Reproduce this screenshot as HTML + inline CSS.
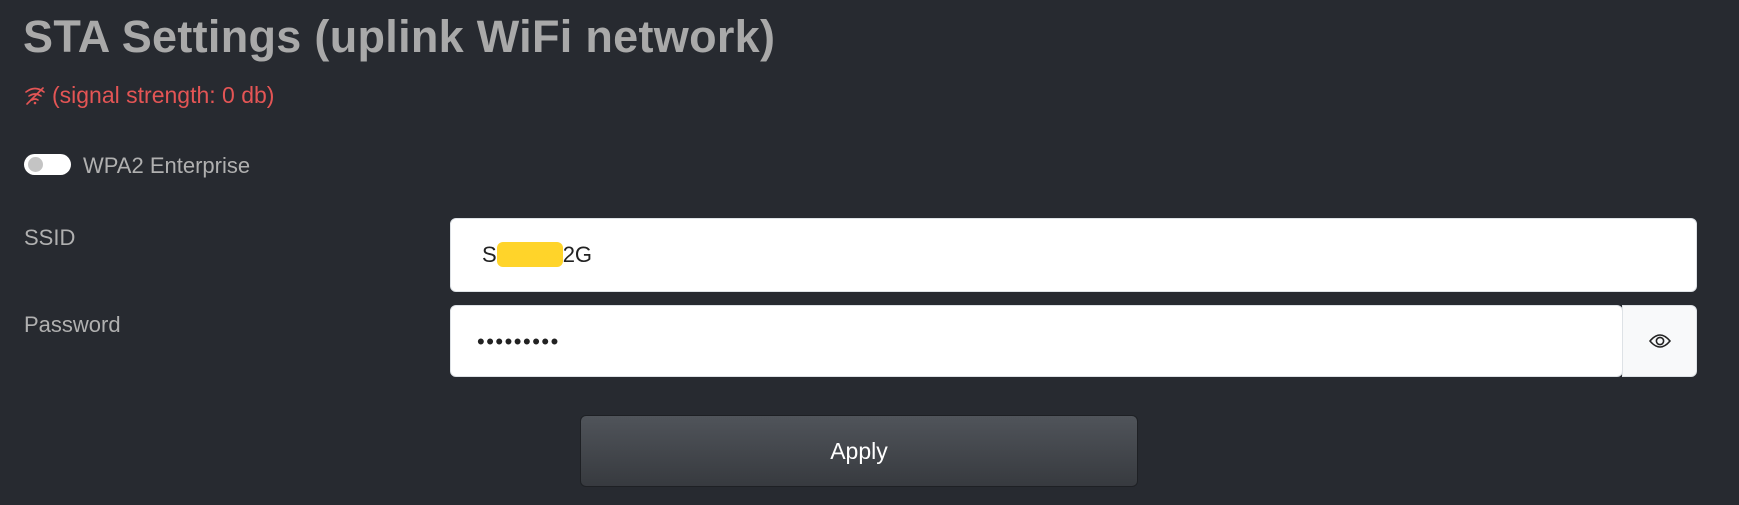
<!DOCTYPE html>
<html><head><style>
html,body{margin:0;padding:0;width:1739px;height:505px;background:#272a30;overflow:hidden;font-family:"Liberation Sans",sans-serif;}
.a{position:absolute;}
.t{left:23px;top:11px;font-size:45px;font-weight:bold;color:#a9a9a9;white-space:nowrap;letter-spacing:0.3px;}
.sig{left:24px;top:82px;font-size:23px;color:#e45555;white-space:nowrap;}
.tog{left:24px;top:154px;width:47px;height:21px;background:#fff;border-radius:11px;}
.tog i{position:absolute;left:4px;top:3px;width:15px;height:15px;border-radius:50%;background:#c4c4c4;}
.lbl{font-size:22px;color:#b0b0b0;white-space:nowrap;}
.in{background:#fff;border:1px solid #dee2e6;border-radius:6px;box-sizing:border-box;font-size:22px;color:#222;}
</style></head><body>
<div class="a t">STA Settings (uplink WiFi network)</div>
<div class="a sig"><svg width="22" height="20" viewBox="0 0 22 20" style="vertical-align:-3px;margin-right:6px"><g fill="none" stroke="#e45555" stroke-width="1.6" stroke-linecap="round"><path d="M2 6 Q11 -1 20 6"/><path d="M5 10 Q11 6 17 10"/><path d="M8 14 Q11 12 14 14"/><path d="M3 18 L19 2"/></g><circle cx="11" cy="17" r="1.3" fill="#e45555"/></svg>(signal strength: 0 db)</div>
<div class="a tog"><i></i></div>
<div class="a lbl" style="left:83px;top:153px">WPA2 Enterprise</div>
<div class="a lbl" style="left:24px;top:225px">SSID</div>
<div class="a lbl" style="left:24px;top:312px">Password</div>
<div class="a in" style="left:450px;top:218px;width:1247px;height:74px;padding:23px 0 0 31px">S<span style="background:#ffd42a;color:#ffd42a;border-radius:6px">xxxxxx</span>2G</div>
<div class="a in" style="left:450px;top:305px;width:1173px;height:72px;padding:23px 0 0 26px;letter-spacing:1.5px">•••••••••</div>
<div class="a in" style="left:1622px;top:305px;width:75px;height:72px;background:#f8f9fa;border-radius:0 6px 6px 0">
<svg class="a" style="left:26px;top:26px" width="22" height="18" viewBox="0 0 22 18"><path d="M1 9 Q11 -3 21 9 Q11 21 1 9Z" fill="none" stroke="#222" stroke-width="1.6"/><circle cx="11" cy="9" r="3.6" fill="none" stroke="#222" stroke-width="1.6"/></svg></div>
<div class="a" style="left:580px;top:415px;width:558px;height:72px;box-sizing:border-box;border:1px solid #1e2024;border-radius:6px;background:linear-gradient(#50545a,#373a3f);color:#fff;font-size:23px;text-align:center;line-height:70px">Apply</div>
</body></html>
